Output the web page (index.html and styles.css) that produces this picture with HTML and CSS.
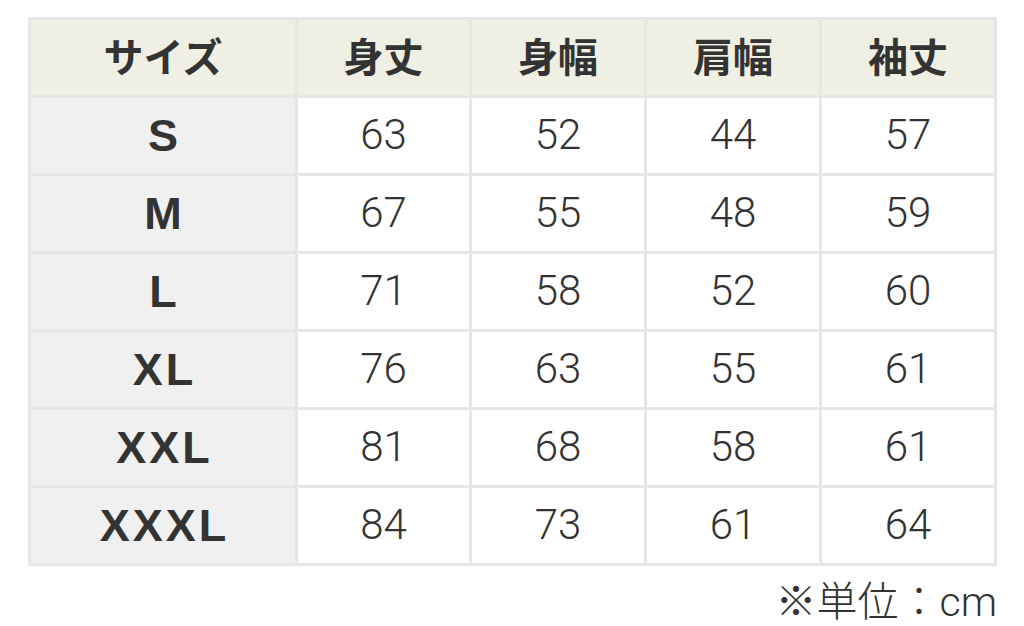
FILE: index.html
```html
<!DOCTYPE html>
<html lang="ja">
<head>
<meta charset="utf-8">
<title>サイズ表</title>
<link rel="stylesheet" href="styles.css">
</head>
<body>
<div class="page">
  <div class="size-table">
    <div class="cell head">サイズ</div>
    <div class="cell head">身丈</div>
    <div class="cell head">身幅</div>
    <div class="cell head">肩幅</div>
    <div class="cell head">袖丈</div>

    <div class="cell label">S</div>
    <div class="cell">63</div><div class="cell">52</div><div class="cell">44</div><div class="cell">57</div>

    <div class="cell label">M</div>
    <div class="cell">67</div><div class="cell">55</div><div class="cell">48</div><div class="cell">59</div>

    <div class="cell label">L</div>
    <div class="cell">71</div><div class="cell">58</div><div class="cell">52</div><div class="cell">60</div>

    <div class="cell label">XL</div>
    <div class="cell">76</div><div class="cell">63</div><div class="cell">55</div><div class="cell">61</div>

    <div class="cell label">XXL</div>
    <div class="cell">81</div><div class="cell">68</div><div class="cell">58</div><div class="cell">61</div>

    <div class="cell label">XXXL</div>
    <div class="cell">84</div><div class="cell">73</div><div class="cell">61</div><div class="cell">64</div>
  </div>
  <p class="unit">※単位：<span class="unit-latin">cm</span></p>
</div>
</body>
</html>
```

FILE: styles.css
```css
html, body {
  margin: 0;
  padding: 0;
  background: #ffffff;
}

body {
  font-family: "Liberation Sans", "Noto Sans CJK JP", sans-serif;
  color: #333333;
}

.page {
  padding: 17px 27px 0 28px;
}

.size-table {
  display: grid;
  grid-template-columns: 264px 171px 172px 172px 172px;
  grid-auto-rows: 75px;
  gap: 3px;
  padding: 3px;
  width: 963px;
  background: #e6e6e6;
}

.cell {
  display: flex;
  align-items: center;
  justify-content: center;
  background: #ffffff;
  font-family: Roboto, "Liberation Sans", sans-serif;
  font-weight: 300;
  font-size: 42px;
  line-height: 1;
  padding-bottom: 2px;
}

.cell.head {
  background: #efefe3;
  font-family: "Noto Sans CJK JP", sans-serif;
  font-weight: 700;
  font-size: 40px;
  padding-bottom: 6px;
}

.cell.label {
  background: #f0f0f0;
  font-family: "Liberation Sans", sans-serif;
  font-weight: 700;
  font-size: 45px;
  letter-spacing: 3px;
  padding-left: 3px;
  padding-bottom: 0;
}

.unit {
  margin: 10px 0 0 0;
  text-align: right;
  font-family: "Noto Sans CJK JP", sans-serif;
  font-weight: 300;
  font-size: 41px;
  line-height: 44px;
  color: #333333;
}

.unit-latin {
  font-family: Roboto, "Liberation Sans", sans-serif;
  font-weight: 300;
}
```
